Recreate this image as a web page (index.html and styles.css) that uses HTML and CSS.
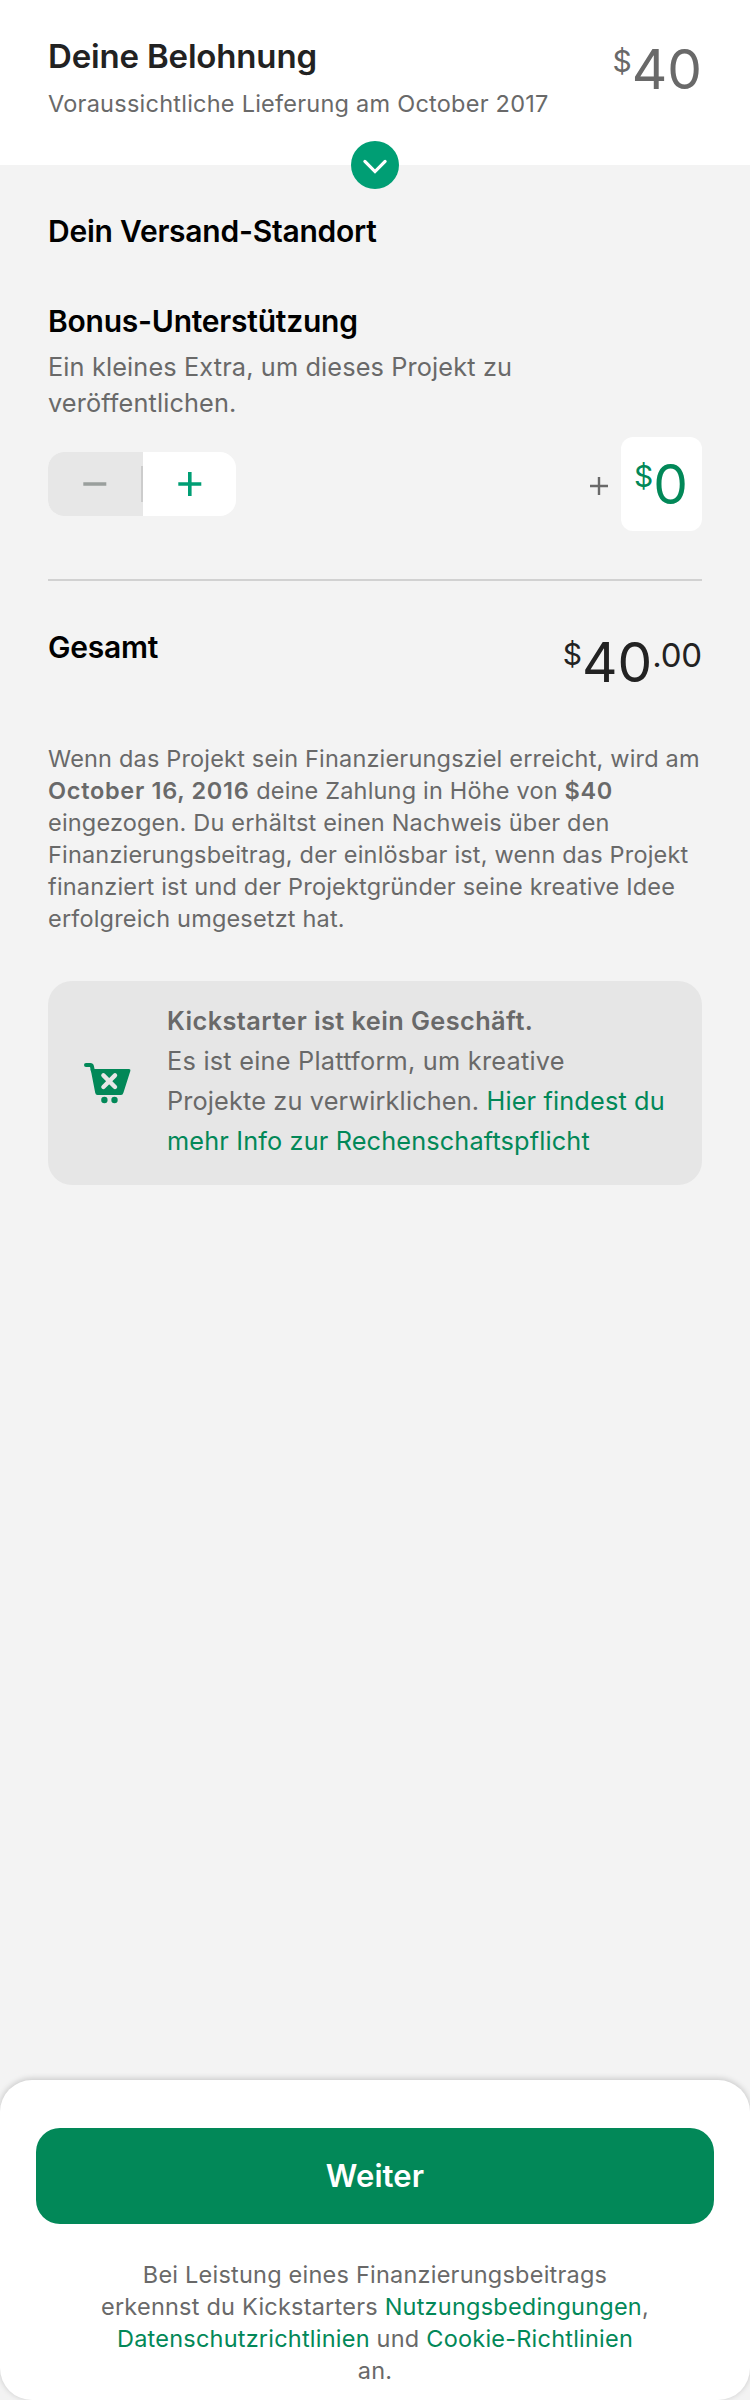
FILE: index.html
```html
<!DOCTYPE html>
<html lang="de">
<head>
<meta charset="utf-8">
<title>Deine Belohnung</title>
<link rel="stylesheet" href="styles.css">
</head>
<body>
<div class="page">
  <header class="reward">
    <div class="reward-info">
      <h1 class="reward-title">Deine Belohnung</h1>
      <p class="reward-delivery">Voraussichtliche Lieferung am October 2017</p>
    </div>
    <div class="price price-muted"><span class="price-symbol">$</span><span class="price-value">40</span></div>
    <button class="expand" aria-label="Details">
      <svg width="48" height="48" viewBox="0 0 48 48"><path d="M13.9 20.4 24 30.6 34.1 20.4" fill="none" stroke="#fff" stroke-width="3.2" stroke-linecap="round"/></svg>
    </button>
  </header>
  <main class="content">
    <h2 class="heading">Dein Versand-Standort</h2>
    <h2 class="heading heading-bonus">Bonus-Unterstützung</h2>
    <p class="bonus-text">Ein kleines Extra, um dieses Projekt zu<br>veröffentlichen.</p>
    <div class="bonus-row">
      <div class="stepper">
        <div class="step step-minus"><svg width="24" height="26" viewBox="0 0 24 26"><path d="M.3 13H23.3" stroke="#9a9f9d" stroke-width="3.6"/></svg></div>
        <div class="step step-plus"><svg width="24" height="26" viewBox="0 0 24 26"><path d="M.3 13H23.3M11.8 1V25" stroke="#009e74" stroke-width="3.6"/></svg></div>
      </div>
      <div class="bonus-amount">
        <svg class="amount-plus" width="18" height="18" viewBox="0 0 18 18"><path d="M0 9H18M9 0V18" stroke="#696969" stroke-width="2.4"/></svg>
        <div class="amount-box"><div class="price price-green"><span class="price-symbol">$</span><span class="price-value">0</span></div></div>
      </div>
    </div>
    <div class="total">
      <h2 class="heading">Gesamt</h2>
      <div class="price price-total"><span class="price-symbol">$</span><span class="price-value">40</span><span class="price-cents">.00</span></div>
    </div>
    <p class="terms">Wenn das Projekt sein Finanzierungsziel erreicht, wird am<br><b>October 16, 2016</b> deine Zahlung in Höhe von <b>$40</b><br>eingezogen. Du erhältst einen Nachweis über den<br>Finanzierungsbeitrag, der einlösbar ist, wenn das Projekt<br>finanziert ist und der Projektgründer seine kreative Idee<br>erfolgreich umgesetzt hat.</p>
    <section class="notice">
      <svg class="cart" width="47" height="41" viewBox="0 0 47 41">
        <path d="M2 2H6.4Q7.6 2 7.9 3.2L8.8 7.5" fill="none" stroke="#028858" stroke-width="4" stroke-linecap="round"/>
        <path d="M6.6 6H45Q46.8 6 46.4 7.8L39.5 29.5Q38.8 32 37 32H13.5Q11.6 32 11.2 29.8Z" fill="#028858"/>
        <path d="M19.4 12.4 31 24M31 12.4 19.4 24" stroke="#e6e6e6" stroke-width="4.4" stroke-linecap="round"/>
        <circle cx="20.4" cy="37" r="3.2" fill="#028858"/><circle cx="30.5" cy="37" r="3.2" fill="#028858"/>
      </svg>
      <p class="notice-text"><b>Kickstarter ist kein Geschäft.</b><br>Es ist eine Plattform, um kreative<br><span class="tight">Projekte zu verwirklichen. <a>Hier findest du</a></span><br><span class="tight"><a>mehr Info zur Rechenschaftspflicht</a></span></p>
    </section>
  </main>
  <footer class="footer">
    <button class="continue">Weiter</button>
    <p class="legal">Bei Leistung eines Finanzierungsbeitrags<br>erkennst du Kickstarters <a>Nutzungsbedingungen</a>,<br><a>Datenschutzrichtlinien</a> und <a>Cookie-Richtlinien</a><br>an.</p>
  </footer>
</div>
</body>
</html>
```
FILE: styles.css
```css
* { box-sizing: border-box; margin: 0; padding: 0; }
body { background: #f3f3f3; font-family: Inter, "Liberation Sans", sans-serif; color: #696969; }
.page { width: 750px; height: 2400px; display: flex; flex-direction: column; }
button { border: 0; font-family: inherit; }
a { color: #028858; }
b { font-weight: 600; }

/* Reward header */
.reward { position: relative; display: flex; justify-content: space-between; height: 165px; padding: 36px 48px 0; background: #fff; }
.reward-title { font-size: 33px; line-height: 40px; font-weight: 600; letter-spacing: -.17px; color: #222; }
.reward-delivery { margin-top: 12px; font-size: 23.5px; line-height: 32px; letter-spacing: .24px; }
.expand { position: absolute; left: 351px; top: 141px; width: 48px; height: 48px; border-radius: 50%; background: #009e74; }
.expand svg { display: block; }

/* Prices */
.price { display: flex; align-items: flex-start; }
.price-symbol { margin-top: 5px; font-size: 30px; line-height: 40px; }
.price-value { font-size: 55px; line-height: 66px; }
.price-cents { margin-top: 6px; font-size: 33px; line-height: 40px; letter-spacing: -.2px; }
.price-green { color: #028858; }
.price-total { margin-top: 2px; color: #222; }

/* Bonus and total */
.content { flex: 1; padding: 46px 48px 0; }
.heading { font-size: 30px; line-height: 40px; font-weight: 600; letter-spacing: -.23px; color: #000; }
.heading-bonus { margin-top: 50px; }
.bonus-text { margin-top: 8px; font-size: 25.3px; line-height: 36px; letter-spacing: .13px; }
.bonus-row { display: flex; justify-content: space-between; align-items: center; height: 94px; margin-top: 16px; }
.stepper { display: flex; width: 188px; height: 64px; border-radius: 16px; overflow: hidden; background: #fff; }
.step { display: flex; align-items: center; justify-content: center; }
.step-minus { width: 95px; padding-right: 2px; background: linear-gradient(#ccc, #ccc) right center / 2px 36px no-repeat #e7e7e7; }
.step-plus { width: 93px; }
.bonus-amount { display: flex; align-items: center; gap: 13px; }
.amount-plus { margin-top: 4px; }
.amount-box { width: 81px; height: 94px; border-radius: 12px; background: #fff; padding: 14px 0 0 13px; }
.total { display: flex; justify-content: space-between; height: 164px; margin-top: 48px; padding-top: 46px; border-top: 2px solid #d1d1d1; }
.terms { font-size: 23.5px; line-height: 32px; letter-spacing: .18px; }
.terms b { letter-spacing: .7px; }

/* Accountability notice */
.notice { display: flex; align-items: center; height: 204px; margin-top: 46px; padding-left: 36px; border-radius: 24px; background: #e6e6e6; }
.notice-text { margin: -4px 0 0 36px; font-size: 25.3px; line-height: 40px; letter-spacing: .24px; }
.notice-text b { letter-spacing: .43px; }
.notice-text .tight { letter-spacing: .14px; }

/* Footer */
.footer { height: 320px; padding: 48px 36px 0; border-radius: 32px; background: #fff; box-shadow: 0 -1px 6px rgba(0, 0, 0, .2); text-align: center; }
.continue { display: block; width: 678px; height: 96px; padding-bottom: 1px; border-radius: 24px; background: #028858; color: #fff; font-size: 31px; font-weight: 600; letter-spacing: .1px; }
.legal { margin-top: 35px; font-size: 23.5px; line-height: 32px; letter-spacing: .22px; }
```
